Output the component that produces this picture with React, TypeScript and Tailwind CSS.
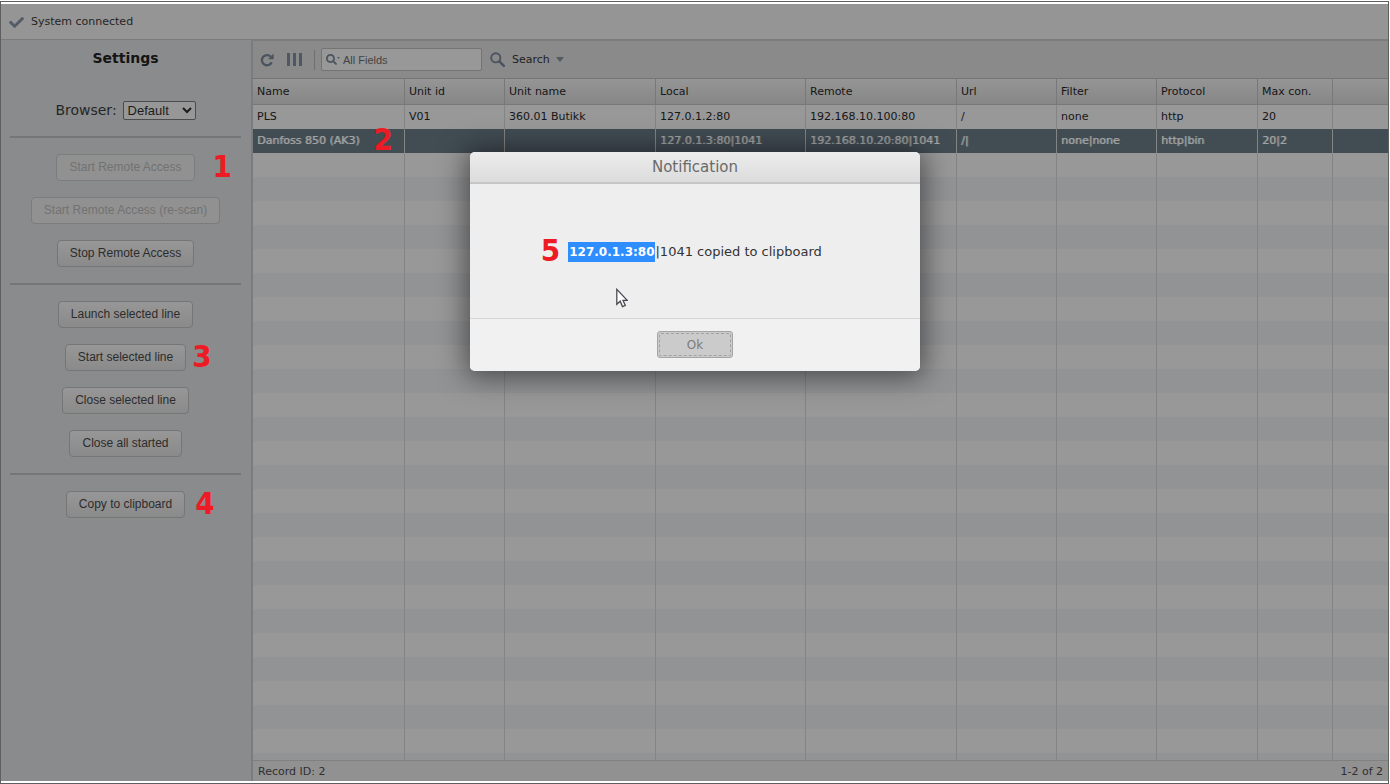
import type { ReactNode } from "react";
import { FaCheck, FaSearch } from "react-icons/fa";

const columns = [
  { label: "Name", width: "w-[152px]" },
  { label: "Unit id", width: "w-[100px]" },
  { label: "Unit name", width: "w-[151px]" },
  { label: "Local", width: "w-[150px]" },
  { label: "Remote", width: "w-[151px]" },
  { label: "Url", width: "w-[100px]" },
  { label: "Filter", width: "w-[100px]" },
  { label: "Protocol", width: "w-[101px]" },
  { label: "Max con.", width: "w-[75px]" },
  { label: "", width: "w-auto" },
];

const rows = [
  ["PLS", "V01", "360.01 Butikk", "127.0.1.2:80", "192.168.10.100:80", "/", "none", "http", "20", ""],
  ["Danfoss 850 (AK3)", "", "", "127.0.1.3:80|1041", "192.168.10.20:80|1041", "/|", "none|none", "http|bin", "20|2", ""],
];

const SELECTED = 1;
const ROW_COUNT = 60;

function Marker({ children, className }: { children: ReactNode; className: string }) {
  return (
    <span
      className={`absolute top-1/2 -translate-y-1/2 pb-1 font-['DejaVu_Sans_Condensed','DejaVu_Sans',sans-serif] text-[31px] leading-8 font-bold text-[#ed1c24] ${className}`}
    >
      {children}
    </span>
  );
}

function SideButton({ label, disabled, marker }: { label: string; disabled?: boolean; marker?: ReactNode }) {
  return (
    <div className="relative">
      <button
        type="button"
        disabled={disabled}
        className="block h-[27px] rounded-[4px] border border-[#757676] bg-linear-to-b from-[#979797] to-[#8a8a8a] px-3 pb-px font-['Liberation_Sans',sans-serif] text-[12px] text-[#2c2c2c] disabled:border-[#7b7c7c] disabled:from-[#919191] disabled:to-[#919191] disabled:text-[#727272]"
      >
        {label}
      </button>
      {marker}
    </div>
  );
}

function Divider() {
  return <hr className="w-full border-0 border-t-2 border-[#757677]" />;
}

function Sidebar() {
  return (
    <aside className="flex w-[250px] shrink-0 flex-col items-center bg-[#8a8b8c] pt-2 pr-[10px] pl-[9px]">
      <h1 className="text-[14px] leading-5 font-bold text-[#141414]">Settings</h1>
      <label className="mt-8 mb-4 flex h-5 items-center gap-[6px] text-[14px] text-[#262626]">
        Browser:
        <select className="h-[19px] w-[73px] rounded-[2px] border border-[#4c4c4c] bg-[#979797] font-['Liberation_Sans',sans-serif] text-[13px] text-[#1c1c1c]">
          <option>Default</option>
        </select>
      </label>
      <Divider />
      <div className="flex flex-col items-center gap-4 pt-4 pb-4">
        <SideButton label="Start Remote Access" disabled marker={<Marker className="left-full ml-[18px]">1</Marker>} />
        <SideButton label="Start Remote Access (re-scan)" disabled />
        <SideButton label="Stop Remote Access" />
      </div>
      <Divider />
      <div className="flex flex-col items-center gap-4 pt-4 pb-4">
        <SideButton label="Launch selected line" />
        <SideButton label="Start selected line" marker={<Marker className="left-full ml-[6px]">3</Marker>} />
        <SideButton label="Close selected line" />
        <SideButton label="Close all started" />
      </div>
      <Divider />
      <div className="flex flex-col items-center pt-4">
        <SideButton label="Copy to clipboard" marker={<Marker className="left-full ml-[10px]">4</Marker>} />
      </div>
    </aside>
  );
}

function ReloadIcon() {
  return (
    <svg viewBox="0 0 14 14" className="size-[14px]" fill="none" stroke="#4b545e" strokeWidth="2.3">
      <path d="M11.7 9.2A5.1 5.1 0 1 1 10.6 3.5" />
      <path d="M13.6 0.6V6.2H8Z" fill="#4b545e" stroke="none" />
    </svg>
  );
}

function Toolbar() {
  return (
    <div className="flex h-[37px] shrink-0 items-center bg-[#8a8a8a] pl-[7px] text-[11px] text-[#1f1f1f]">
      <button type="button" aria-label="Reload">
        <ReloadIcon />
      </button>
      <button type="button" aria-label="Columns" className="ml-[13px] flex gap-[3px]">
        <span className="h-[13px] w-[3px] bg-[#4f5862]" />
        <span className="h-[13px] w-[3px] bg-[#4f5862]" />
        <span className="h-[13px] w-[3px] bg-[#4f5862]" />
      </button>
      <span className="ml-3 h-5 w-px bg-[#6f6f6f]" />
      <label className="ml-[6px] flex h-[23px] w-[161px] items-center gap-[3px] rounded-[2px] border border-[#747474] bg-[#989898] pl-1">
        <span className="flex items-start text-[#4b545e]">
          <FaSearch className="size-[11px]" />
          <svg viewBox="0 0 4 3" className="mt-[3px] h-[2px] w-[3px]" fill="currentColor">
            <path d="M0 0h4L2 3z" />
          </svg>
        </span>
        <input
          aria-label="Search fields"
          placeholder="All Fields"
          className="w-full min-w-0 bg-transparent pt-[2px] font-['Liberation_Sans',sans-serif] text-[11px] outline-none placeholder:text-[#444]"
        />
      </label>
      <button type="button" className="ml-2 flex items-center">
        <svg viewBox="0 0 15 15" className="size-[15px]" fill="none" stroke="#4b545e">
          <circle cx="5.8" cy="5.8" r="4.6" strokeWidth="1.9" />
          <path d="M9.4 9.4L13.8 13.8" strokeWidth="2.6" strokeLinecap="round" />
        </svg>
        <span className="ml-[7px] pt-[2px]">Search</span>
        <svg viewBox="0 0 8 5" className="ml-[6px] h-[5px] w-2" fill="#535a61">
          <path d="M0 0h8L4 5z" />
        </svg>
      </button>
    </div>
  );
}

function Grid() {
  return (
    <div className="min-h-0 flex-1 overflow-hidden border-t border-[#747474]">
      <table className="w-full table-fixed border-separate border-spacing-0 text-[11px] text-[#161616]">
        <thead>
          <tr className="h-[26px] bg-linear-to-b from-[#959595] to-[#868686]">
            {columns.map((c, i) => (
              <th
                key={i}
                className={`border-r border-b border-[#787878] px-1 pt-[2px] text-left font-normal last:border-r-0 ${c.width}`}
              >
                {c.label}
              </th>
            ))}
          </tr>
        </thead>
        <tbody>
          {Array.from({ length: ROW_COUNT }, (_, r) => (
            <tr
              key={r}
              className={
                r === SELECTED
                  ? "h-6 bg-[#414c53] text-[#a3a5a6] [text-shadow:1px_0_0_#7f8486]"
                  : r % 2
                    ? "h-6 bg-[#929395]"
                    : "h-6 bg-[#989898]"
              }
            >
              {columns.map((_, c) => (
                <td key={c} className="border-r border-[#838484] px-1 pt-px whitespace-nowrap last:border-r-0">
                  {r === SELECTED && c === 0 ? (
                    <span className="relative">
                      {rows[r][c]}
                      <Marker className="left-full ml-[14px] [text-shadow:none]">2</Marker>
                    </span>
                  ) : (
                    rows[r]?.[c]
                  )}
                </td>
              ))}
            </tr>
          ))}
        </tbody>
      </table>
    </div>
  );
}

function Notification() {
  return (
    <div className="absolute inset-0 flex items-start justify-center pt-[152px]">
      <section
        role="dialog"
        aria-label="Notification"
        className="w-[450px] overflow-hidden rounded-[5px] bg-[#eee] shadow-[0_2px_28px_4px_rgba(0,0,0,0.5)]"
      >
        <h2 className="flex h-8 items-center justify-center border-b-2 border-[#c6c6c6] bg-linear-to-b from-[#ececec] to-[#dcdcdc] text-[15px] text-[#6a6a6a]">
          Notification
        </h2>
        <div className="relative flex h-[134px] items-center justify-center pt-[2px] text-[13px] text-[#333]">
          <p className="relative">
            <Marker className="right-full mr-2">5</Marker>
            <span className="bg-[#2f8eff] px-px py-[3px] text-[12px] font-bold text-white">127.0.1.3:80</span>
            |1041 copied to clipboard
          </p>
          <svg viewBox="0 0 12 20" className="absolute top-[104px] left-[146px] h-5 w-3" fill="#fff" stroke="#4a4a52" strokeWidth="1.3">
            <path d="M0.8 1.4V16.2L4.2 13.2L6.5 18.6L9.3 17.4L7 12.3H11.2Z" />
          </svg>
        </div>
        <footer className="flex h-[53px] items-center justify-center border-t border-[#d6d6d6] bg-[#f1f1f1] pb-px">
          <button
            type="button"
            className="h-[27px] w-[76px] rounded-[3px] border border-[#a5a5a5] bg-[#cbcbcb] p-px text-[12px] text-[#7b7b7b]"
          >
            <span className="flex h-full items-center justify-center rounded-[2px] border border-dashed border-[#a2a2a2]">Ok</span>
          </button>
        </footer>
      </section>
    </div>
  );
}

export default function App() {
  return (
    <div className="flex h-screen flex-col bg-white pt-px pr-px font-['DejaVu_Sans',sans-serif]">
      <div className="flex min-h-0 flex-1 flex-col border border-[#5f5f5f] pt-[2px] pb-[2px]">
        <header className="flex h-9 shrink-0 items-center gap-[7px] border-b border-[#7c7c7c] bg-[#959595] pt-[2px] pl-2 text-[11px] text-[#262626]">
          <FaCheck className="size-[15px] text-[#535c66]" />
          System connected
        </header>
        <div className="flex min-h-0 flex-1">
          <Sidebar />
          <main className="flex min-w-0 flex-1 flex-col border-t border-l-2 border-[#7b7c7c] bg-[#8f8f8f]">
            <Toolbar />
            <Grid />
            <footer className="flex h-[21px] shrink-0 items-center justify-between border-t border-[#808080] bg-[#919191] px-[5px] pt-[2px] text-[11px] text-[#303030]">
              <span>Record ID: 2</span>
              <span>1-2 of 2</span>
            </footer>
          </main>
        </div>
      </div>
      <Notification />
    </div>
  );
}
